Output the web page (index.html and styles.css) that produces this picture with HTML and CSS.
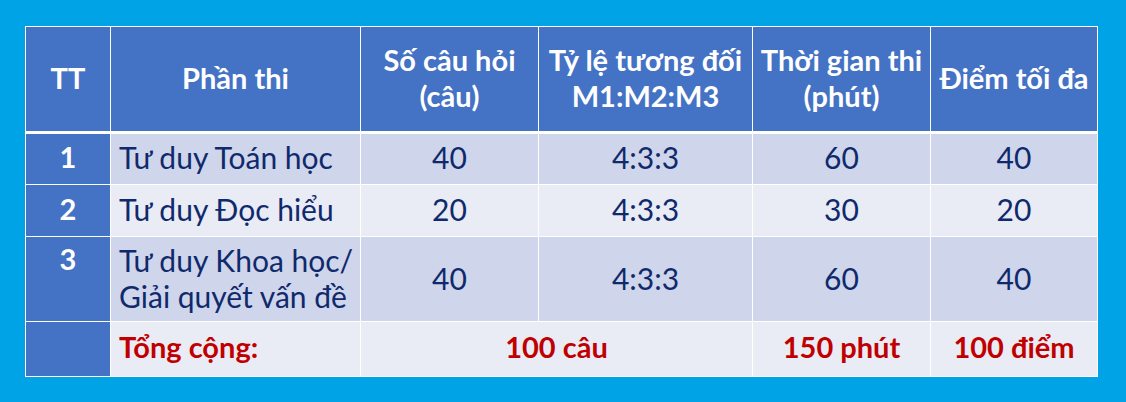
FILE: index.html
```html
<!DOCTYPE html>
<html lang="vi">
<head>
<meta charset="utf-8">
<title>Cấu trúc bài thi</title>
<link rel="stylesheet" href="styles.css">
</head>
<body>
<div class="frame">
  <table class="exam">
    <colgroup>
      <col class="c-tt">
      <col class="c-part">
      <col class="c-count">
      <col class="c-ratio">
      <col class="c-time">
      <col class="c-score">
    </colgroup>
    <thead>
      <tr class="head">
        <th>TT</th>
        <th>Phần thi</th>
        <th>Số câu hỏi<br>(câu)</th>
        <th>Tỷ lệ tương đối<br>M1:M2:M3</th>
        <th>Thời gian thi<br>(phút)</th>
        <th>Điểm tối đa</th>
      </tr>
    </thead>
    <tbody>
      <tr class="odd r1">
        <td class="num">1</td>
        <td class="name">Tư duy Toán học</td>
        <td>40</td>
        <td>4:3:3</td>
        <td>60</td>
        <td>40</td>
      </tr>
      <tr class="even r2">
        <td class="num">2</td>
        <td class="name">Tư duy Đọc hiểu</td>
        <td>20</td>
        <td>4:3:3</td>
        <td>30</td>
        <td>20</td>
      </tr>
      <tr class="odd r3">
        <td class="num">3</td>
        <td class="name">Tư duy Khoa học/<br>Giải quyết vấn đề</td>
        <td>40</td>
        <td>4:3:3</td>
        <td>60</td>
        <td>40</td>
      </tr>
      <tr class="even total">
        <td class="num"></td>
        <td class="name">Tổng cộng:</td>
        <td colspan="2">100 câu</td>
        <td>150 phút</td>
        <td>100 điểm</td>
      </tr>
    </tbody>
  </table>
</div>
</body>
</html>
```

FILE: styles.css
```css
html, body {
  margin: 0;
  padding: 0;
}
body {
  background: #00a3e6;
  width: 1126px;
  height: 402px;
  overflow: hidden;
  font-family: Lato, "Open Sans", "Liberation Sans", sans-serif;
}
.frame {
  padding: 26px 0 0 25px;
}
.exam {
  border-collapse: collapse;
  table-layout: fixed;
  width: 1072px;
  border: 1px solid #dfeaf7;
}
.c-tt { width: 85px; }
.c-part { width: 250px; }
.c-count { width: 178px; }
.c-ratio { width: 214px; }
.c-time { width: 178px; }
.c-score { width: 167px; }

.exam th,
.exam td {
  box-sizing: border-box;
  border: 1px solid #ffffff;
  padding: 0;
  text-align: center;
  vertical-align: middle;
}
.exam th {
  background: #4472c4;
  color: #ffffff;
  font-weight: 700;
  font-size: 29px;
  line-height: 36px;
  height: 106px;
  border-bottom: 3px solid #ffffff;
  padding-bottom: 2px;
}
.exam td {
  color: #0f2a6c;
  font-weight: 400;
  font-size: 30px;
  line-height: 36px;
  padding-bottom: 4px;
}
.odd td { background: #cfd5ea; }
.even td { background: #e9ebf5; }
.exam td.num {
  background: #4472c4;
  color: #ffffff;
  font-weight: 700;
  font-size: 29px;
}
.exam td.name {
  text-align: left;
  padding-left: 8px;
}
.r1 td { height: 52px; }
.r2 td { height: 52px; }
.r3 td { height: 85px; padding-bottom: 2px; }
.r3 td.num {
  vertical-align: top;
  padding-top: 4px;
}
.total td {
  height: 55px;
  color: #c00000;
  font-weight: 700;
  font-size: 29px;
}
```
